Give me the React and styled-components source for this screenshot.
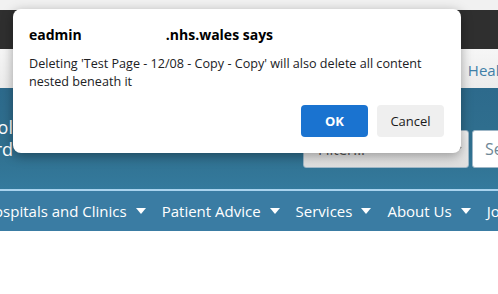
import styled, { createGlobalStyle } from "styled-components";

const Global = createGlobalStyle`
  html, body {
    margin: 0;
    padding: 0;
    background: #fff;
    font-family: "Open Sans", "Noto Sans", sans-serif;
  }
  #root {
    width: 498px;
    height: 294px;
    overflow: hidden;
    position: relative;
  }
`;

const App = () => {
  return (
    <>
      <Global />
      <Page>
        <TopGap />
        <DarkBar />
        <UtilityBar>
          <UtilityLink>Health</UtilityLink>
        </UtilityBar>
        <Masthead>
          <Brand>
            <span>Control</span>
            <span>Board</span>
          </Brand>
          <SearchArea>
            <Select>
              <SelectText>Filter...</SelectText>
              <Chevron viewBox="0 0 10 10">
                <path d="M2 7 L7 3" stroke="#333" strokeWidth="1.6" fill="none" />
              </Chevron>
            </Select>
            <SearchInput>Search</SearchInput>
          </SearchArea>
        </Masthead>
        <Divider />
        <Nav>
          <NavItem $offset>Hospitals and Clinics <Caret /></NavItem>
          <NavItem>Patient Advice <Caret /></NavItem>
          <NavItem>Services <Caret /></NavItem>
          <NavItem>About Us <Caret /></NavItem>
          <NavItem>Jobs</NavItem>
        </Nav>
      </Page>

      <Dialog>
        <Title>
          <span>eadmin</span>
          <Redacted />
          <span>.nhs.wales says</span>
        </Title>
        <Message>
          Deleting 'Test Page - 12/08 - Copy - Copy' will also delete all content nested beneath it
        </Message>
        <Buttons>
          <Button $primary>OK</Button>
          <Button>Cancel</Button>
        </Buttons>
      </Dialog>
    </>
  );
};

export default App;

const Caret = () => (
  <CaretSvg viewBox="0 0 10 6">
    <path d="M0 0 L10 0 L5 6 Z" fill="#fff" />
  </CaretSvg>
);

const Page = styled.div`
  display: flex;
  flex-direction: column;
  width: 498px;
`;

const TopGap = styled.div`
  height: 10px;
  background: #f1f1f1;
`;

const DarkBar = styled.div`
  height: 39px;
  background: #2f2f2f;
`;

const UtilityBar = styled.div`
  height: 39px;
  background: linear-gradient(#f6f6f6, #ececec);
  display: flex;
  align-items: center;
  justify-content: flex-end;
  overflow: hidden;
`;

const UtilityLink = styled.span`
  font-size: 15px;
  color: #3f7fa8;
  margin-right: -16px;
  margin-top: 2px;
`;

const Masthead = styled.div`
  height: 101px;
  background: linear-gradient(180deg, #2d6a8c 0%, #30708f 60%, #347a9d 100%);
  display: flex;
  justify-content: space-between;
  overflow: hidden;
`;

const Brand = styled.div`
  display: flex;
  flex-direction: column;
  align-items: flex-end;
  margin-left: -45px;
  padding-top: 28px;
  color: #fff;
  font-size: 18px;
  line-height: 22px;
  width: 58px;
`;

const SearchArea = styled.div`
  display: flex;
  gap: 3px;
  padding-top: 42px;
  margin-right: -40px;
`;

const Select = styled.div`
  position: relative;
  width: 166px;
  height: 38px;
  box-sizing: border-box;
  border: 1px solid #9fb7c7;
  border-radius: 3px;
  background: linear-gradient(#f4f4f4, #dedede);
  display: flex;
  align-items: center;
  padding-left: 14px;
`;

const SelectText = styled.span`
  font-size: 15px;
  color: #555;
`;

const Chevron = styled.svg`
  position: absolute;
  right: 4px;
  top: 13px;
  width: 10px;
  height: 10px;
`;

const SearchInput = styled.div`
  width: 66px;
  height: 38px;
  box-sizing: border-box;
  border: 1px solid #9fb7c7;
  border-radius: 3px;
  background: #fff;
  display: flex;
  align-items: center;
  padding-left: 12px;
  font-size: 16px;
  color: #6f8796;
`;

const Divider = styled.div`
  height: 2px;
  background: #a9d3ee;
`;

const Nav = styled.nav`
  height: 40px;
  background: #3a7ca3;
  display: flex;
  align-items: center;
  gap: 16px;
  white-space: nowrap;
  overflow: hidden;
`;

const NavItem = styled.span`
  display: inline-flex;
  align-items: center;
  gap: 9px;
  color: #fff;
  font-size: 15px;
  flex-shrink: 0;
  margin-left: ${(p) => (p.$offset ? "-17px" : "0")};
`;

const CaretSvg = styled.svg`
  width: 10px;
  height: 6px;
`;

const Dialog = styled.div`
  position: absolute;
  left: 13px;
  top: 9px;
  width: 448px;
  height: 144px;
  box-sizing: border-box;
  background: #fff;
  border-radius: 8px;
  box-shadow: 0 3px 12px rgba(0, 0, 0, 0.35);
  padding: 16px 16px 16px 16px;
  display: flex;
  flex-direction: column;
  font-family: "Open Sans", "Noto Sans", sans-serif;
  color: #202124;
`;

const Title = styled.div`
  display: flex;
  font-size: 14px;
  font-weight: 700;
  line-height: 20px;
  color: #000;
`;

const Redacted = styled.span`
  width: 84px;
`;

const Message = styled.div`
  margin-top: 10px;
  font-size: 12.6px;
  line-height: 18px;
  color: #202124;
`;

const Buttons = styled.div`
  margin-top: auto;
  display: flex;
  justify-content: flex-end;
  gap: 9px;
  padding-right: 1px;
`;

const Button = styled.button`
  width: 67px;
  height: 32px;
  border: none;
  border-radius: 4px;
  font-family: "Open Sans", "Noto Sans", sans-serif;
  font-size: 13px;
  font-weight: ${(p) => (p.$primary ? 700 : 400)};
  background: ${(p) => (p.$primary ? "#1a73d0" : "#efefef")};
  color: ${(p) => (p.$primary ? "#fff" : "#1a1a1a")};
`;
